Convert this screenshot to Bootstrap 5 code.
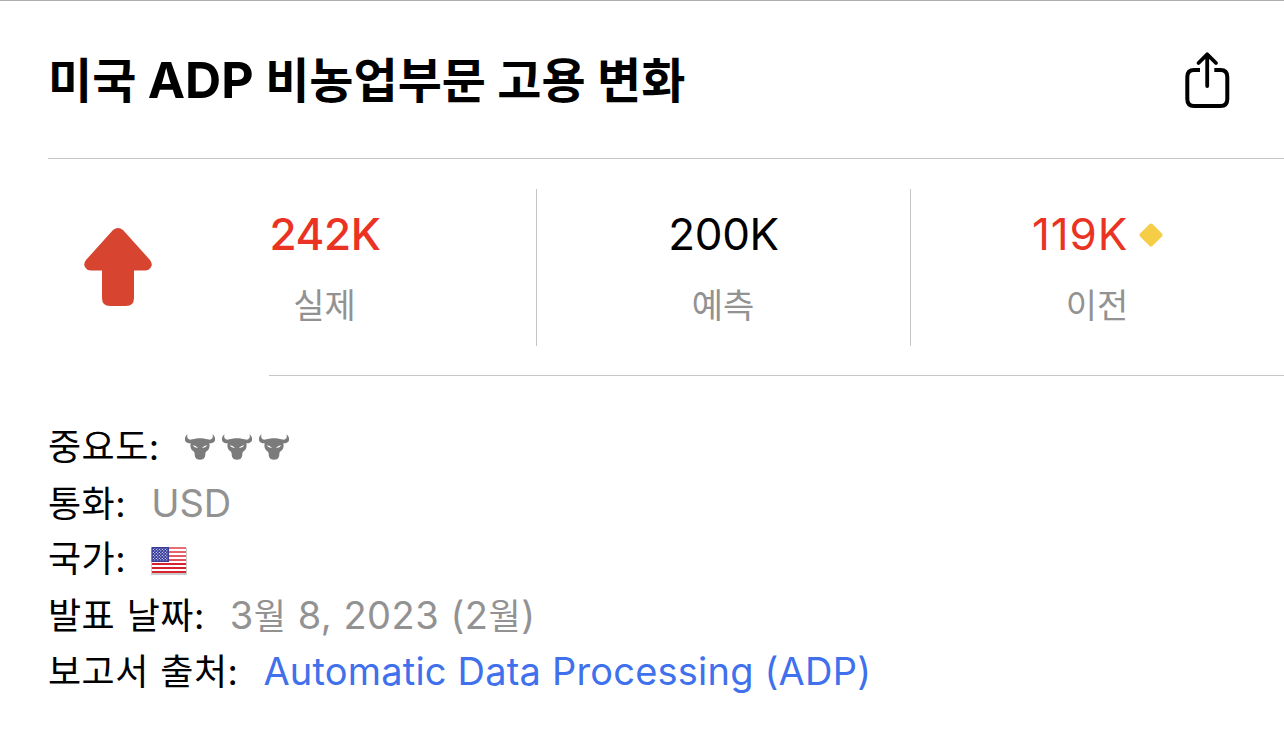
<!DOCTYPE html>
<html lang="ko">
<head>
    <meta charset="UTF-8">
    <meta name="viewport" content="width=device-width, initial-scale=1.0">
    <title>미국 ADP 비농업부문 고용 변화</title>
    <link href="https://cdn.jsdelivr.net/npm/bootstrap@5.3.0/dist/css/bootstrap.min.css" rel="stylesheet">
    <style>
        body {
            font-family: "Inter", "Noto Sans CJK KR", sans-serif;
            color: #000;
            background-color: #fff;
            border-top: 1px solid #aeaeae;
            overflow: hidden;
        }
        .event-header {
            height: 158px;
            margin-left: 48px;
            padding-right: 54px;
            border-bottom: 1px solid #c6c6c8;
        }
        .event-title {
            font-size: 48px;
            font-weight: 700;
            line-height: 60px;
            margin-top: 49px;
        }
        .title-latin {
            font-size: 50px;
            letter-spacing: 0.1px;
        }
        .share-btn {
            margin-top: 50px;
        }
        .event-stats {
            height: 216px;
            padding: 30px 0 29px;
        }
        .stat-direction {
            width: 236px;
        }
        .stat-actual {
            width: 300px;
            padding-right: 122px;
        }
        .stat-cell {
            width: 374px;
            border-left: 1px solid #c6c6c8;
        }
        .stat-value {
            font-size: 44px;
            line-height: 60px;
            letter-spacing: -0.4px;
            margin-top: 15px;
        }
        .stat-previous {
            letter-spacing: 0.9px;
            padding-left: 3px;
        }
        .stat-label {
            font-size: 34px;
            line-height: 50px;
            margin-top: 17px;
            padding-right: 1px;
            color: #929292;
        }
        .stat-red {
            color: #ea3323;
        }
        .stats-rule {
            margin-left: 269px;
            border-top: 1px solid #c6c6c8;
        }
        .event-details {
            padding: 43px 0 0 48px;
        }
        .detail-row {
            height: 56px;
            line-height: 56px;
            font-size: 36px;
            white-space: pre;
            gap: 25px;
        }
        .detail-name {
            letter-spacing: 0.5px;
            word-spacing: 0.8px;
        }
        .detail-value {
            font-size: 38px;
            color: #929292;
        }
        .detail-value .hangul {
            font-size: 35px;
        }
        .date-value {
            letter-spacing: 0.5px;
        }
        .source-link {
            color: #4070ec;
            letter-spacing: 0.2px;
        }
        .bulls {
            gap: 7px;
        }
        .flag-icon {
            margin-bottom: -3px;
        }
    </style>
</head>
<body>
    <!-- Title and share -->
    <header class="event-header d-flex justify-content-between align-items-start">
        <h1 class="event-title mb-0">미국 <span class="title-latin">ADP</span> 비농업부문 고용 변화</h1>
        <button type="button" class="share-btn btn p-0 border-0 lh-1" aria-label="공유">
            <svg width="46" height="58" viewBox="0 0 46 58" fill="none" stroke="#000" stroke-width="4">
                <path d="M16 19H10Q3.3 19 3.3 26V48Q3.3 55 10 55H36.5Q43.3 55 43.3 48V26Q43.3 19 36.5 19H30.3"/>
                <path d="M23.2 35V3.3M14.5 12L23.2 3.3L32 12" stroke-linecap="round" stroke-linejoin="round" stroke-width="3.8"/>
            </svg>
        </button>
    </header>

    <!-- Actual / forecast / previous -->
    <section class="event-stats d-flex">
        <div class="stat-direction d-flex justify-content-center align-items-center">
            <svg width="68" height="79" viewBox="0 0 68 79">
                <path fill="#d74530" d="M29 2Q34 -2 39 2L66 32Q69 36 67 39Q65 42.500 61 42.500H50V70Q50 78 42 78H26Q18 78 18 70V42.500H7Q3 42.500 1 39Q-1 36 2 32Z"/>
            </svg>
        </div>
        <div class="stat-actual text-center">
            <div class="stat-value stat-red fw-medium">242K</div>
            <div class="stat-label">실제</div>
        </div>
        <div class="stat-cell text-center">
            <div class="stat-value">200K</div>
            <div class="stat-label">예측</div>
        </div>
        <div class="stat-cell text-center">
            <div class="stat-value stat-previous stat-red d-flex justify-content-center align-items-center">
                <span>119K</span>
                <svg class="ms-2 mt-1" width="30" height="28" viewBox="0 0 30 28">
                    <path fill="#f5cd46" stroke="#f5cd46" stroke-width="4" stroke-linejoin="round" d="M15 3.5L24.500 13L15 22.500L5.500 13Z"/>
                </svg>
            </div>
            <div class="stat-label">이전</div>
        </div>
    </section>
    <div class="stats-rule"></div>

    <!-- Event details -->
    <section class="event-details">
        <div class="detail-row d-flex align-items-baseline">
            <span class="detail-name">중요도:</span>
            <span class="bulls d-flex">
                <svg class="d-none">
                    <symbol id="bull" viewBox="0 0 90 76">
                        <path fill="#7b7b7b" d="M8 0C5 7 6 14 16 16C23 16 28 12 45 12C62 12 67 16 74 16C84 14 85 7 82 0C91 6 93 17 87 23C82 27 77 27 73 27C75 35 73 45 67 49C62 52 61 55 61 60C61 67 59 71 55 74Q45 78 35 74C31 71 29 67 29 60C29 55 28 52 23 49C17 45 15 35 17 27C13 27 8 27 3 23C-3 17 -1 6 8 0Z"/>
                        <path fill="#fff" d="M23 33Q33 34 39 41Q28 42 23 33ZM67 33Q57 34 51 41Q62 42 67 33Z"/>
                    </symbol>
                </svg>
                <svg width="30" height="26"><use href="#bull"/></svg>
                <svg width="30" height="26"><use href="#bull"/></svg>
                <svg width="30" height="26"><use href="#bull"/></svg>
            </span>
        </div>
        <div class="detail-row d-flex align-items-baseline">
            <span class="detail-name">통화:</span>
            <span class="detail-value">USD</span>
        </div>
        <div class="detail-row d-flex align-items-baseline">
            <span class="detail-name">국가:</span>
            <svg class="flag-icon align-self-center" width="36" height="28" viewBox="0 0 36 28">
                <defs>
                    <linearGradient id="flagShine" x1="0" y1="0" x2="0" y2="1">
                        <stop offset="0" stop-color="#fff" stop-opacity="0.35"/>
                        <stop offset="0.55" stop-color="#fff" stop-opacity="0.2"/>
                        <stop offset="0.6" stop-color="#fff" stop-opacity="0"/>
                    </linearGradient>
                    <pattern id="flagStars" width="3" height="3" patternUnits="userSpaceOnUse">
                        <rect width="3" height="3" fill="#34389a"/>
                        <circle cx="0.8" cy="0.8" r="0.6" fill="#fff"/>
                        <circle cx="2.300" cy="2.300" r="0.6" fill="#fff"/>
                    </pattern>
                </defs>
                <rect x="0" y="1" width="36" height="27" fill="#000" opacity="0.2"/>
                <rect x="1" y="0" width="34" height="26" fill="#fff"/>
                <path stroke="#d8232f" stroke-width="2.200" d="M1 1H35M1 5H35M1 9H35M1 13H35M1 17H35M1 21H35M1 25H35"/>
                <rect x="1" y="0" width="34" height="26" fill="url(#flagShine)"/>
                <rect x="1" y="0.500" width="16.500" height="14" fill="url(#flagStars)" stroke="#3a3c98"/>
            </svg>
        </div>
        <div class="detail-row d-flex align-items-baseline">
            <span class="detail-name">발표 날짜:</span>
            <span class="detail-value date-value">3<span class="hangul">월</span> 8, 2023 (2<span class="hangul">월</span>)</span>
        </div>
        <div class="detail-row d-flex align-items-baseline">
            <span class="detail-name">보고서 출처:</span>
            <a href="#" class="detail-value source-link text-decoration-none">Automatic Data Processing (ADP)</a>
        </div>
    </section>

    <script src="https://cdn.jsdelivr.net/npm/bootstrap@5.3.0/dist/js/bootstrap.bundle.min.js"></script>
</body>
</html>
